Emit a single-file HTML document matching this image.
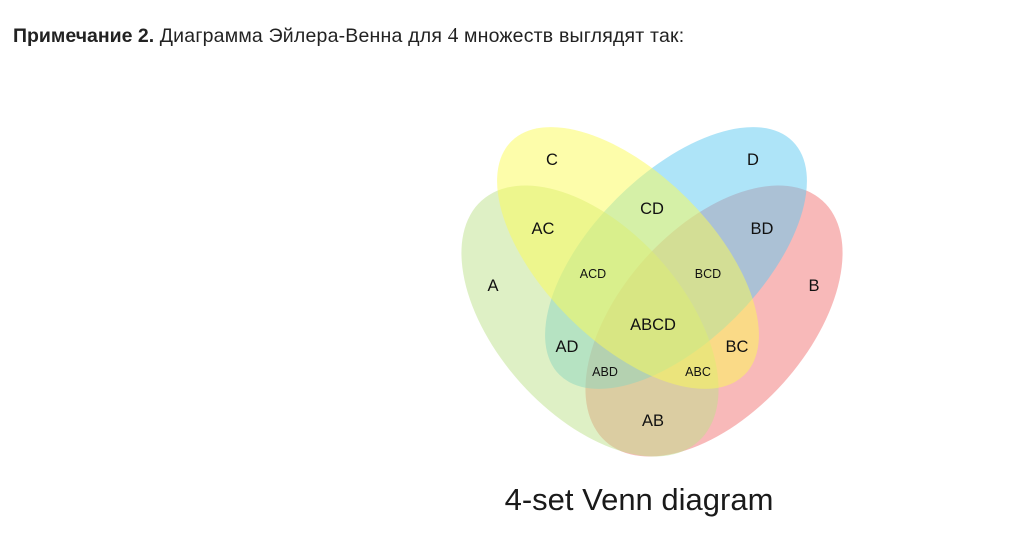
<!DOCTYPE html>
<html><head><meta charset="utf-8"><style>
html,body{margin:0;padding:0;background:#fff;width:1019px;height:540px;overflow:hidden}
.h{position:absolute;left:13px;top:23px;font-family:"Liberation Sans",sans-serif;font-size:19.5px;color:#222;white-space:nowrap;letter-spacing:0.2px}
.h b{font-weight:bold;letter-spacing:0}
.h .n{font-family:"Liberation Serif",serif;font-size:21px}
svg{position:absolute;left:0;top:0}
</style></head><body>
<div class="h"><b>Примечание 2.</b> Диаграмма Эйлера-Венна для <span class="n">4</span> множеств выглядят так:</div>
<svg width="1019" height="540" viewBox="0 0 1019 540">
<ellipse cx="714" cy="321" rx="162" ry="93" transform="rotate(-48 714 321)" fill="#f17373" fill-opacity="0.5"/>
<ellipse cx="676" cy="258" rx="165" ry="84" transform="rotate(-45 676 258)" fill="#5dc9f1" fill-opacity="0.5"/>
<ellipse cx="590" cy="321" rx="162" ry="93" transform="rotate(48 590 321)" fill="#bde28b" fill-opacity="0.5"/>
<ellipse cx="628" cy="258" rx="165" ry="84" transform="rotate(45 628 258)" fill="#fbfb55" fill-opacity="0.5"/>
<g font-family="Liberation Sans,sans-serif" fill="#111" text-anchor="middle">
<g font-size="16.5">
<text x="552" y="165">C</text>
<text x="753" y="165">D</text>
<text x="652" y="214">CD</text>
<text x="543" y="234">AC</text>
<text x="762" y="234">BD</text>
<text x="493" y="291">A</text>
<text x="814" y="291">B</text>
<text x="653" y="330">ABCD</text>
<text x="567" y="352">AD</text>
<text x="737" y="352">BC</text>
<text x="653" y="426">AB</text>
</g>
<g font-size="12.5">
<text x="593" y="278">ACD</text>
<text x="708" y="278">BCD</text>
<text x="605" y="376">ABD</text>
<text x="698" y="376">ABC</text>
</g>
<text x="639" y="510" font-size="31" fill="#1a1a1a">4-set Venn diagram</text>
</g>
</svg>
</body></html>
